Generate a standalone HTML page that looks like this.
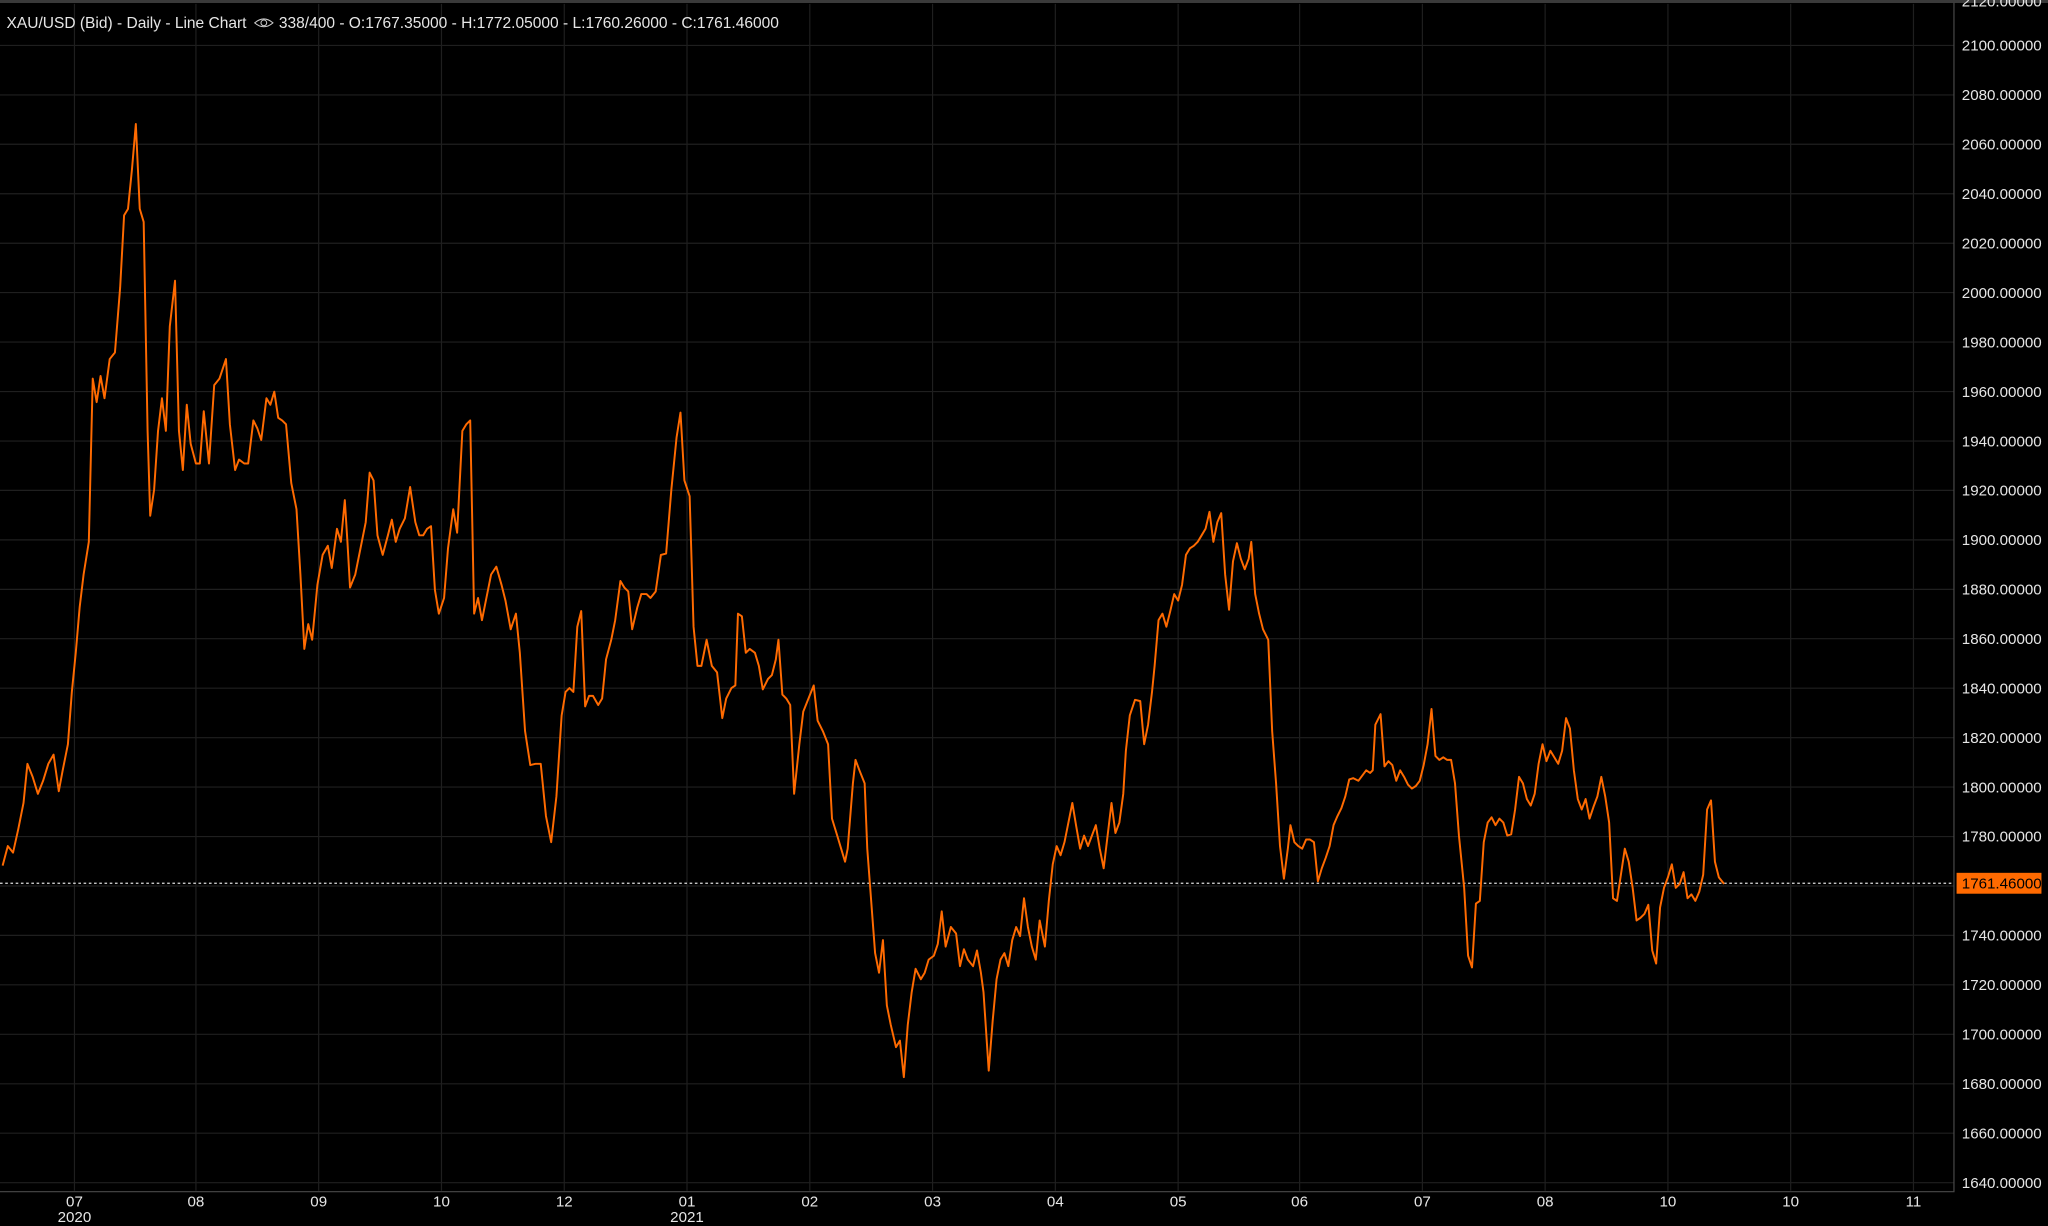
<!DOCTYPE html>
<html><head><meta charset="utf-8"><style>
html,body{margin:0;padding:0;background:#000;width:2048px;height:1226px;overflow:hidden}
svg{display:block}
text{font-family:"Liberation Sans",Arial,sans-serif;fill:#e6e6e6}
</style></head><body>
<svg width="2048" height="1226" viewBox="0 0 1568 939" preserveAspectRatio="none">
<rect width="1568" height="939" fill="#000"/>
<rect x="0" y="0" width="1568" height="2.3" fill="#3a3a3a"/>
<g stroke="#1f1f1f" stroke-width="0.9">
<path d="M0 34.8H1496M0 72.7H1496M0 110.5H1496M0 148.4H1496M0 186.3H1496M0 224.1H1496M0 262H1496M0 299.9H1496M0 337.8H1496M0 375.6H1496M0 413.5H1496M0 451.4H1496M0 489.2H1496M0 527.1H1496M0 565H1496M0 602.8H1496M0 640.7H1496M0 678.6H1496M0 716.4H1496M0 754.3H1496M0 792.2H1496M0 830.1H1496M0 867.9H1496M0 905.8H1496"/>
<path d="M57 3V912M150 3V912M244 3V912M338 3V912M432 3V912M526 3V912M620 3V912M714 3V912M808 3V912M902 3V912M995 3V912M1089 3V912M1183 3V912M1277 3V912M1371 3V912M1465 3V912"/>
</g>
<path d="M1496 2V912.7H0" fill="none" stroke="#4a4a4a" stroke-width="0.9"/>
<line x1="0" y1="676.5" x2="1496" y2="676.5" stroke="#ddd" stroke-width="0.9" stroke-dasharray="2,2"/>
<polyline fill="none" stroke="#ff6a00" stroke-width="1.5" stroke-linejoin="round" points="2,663 6,648 10,653 14,635 18,615 21,585 25,595 29,608 33,598 37,585 41,578 45,606 48,590 52,570 55,530 58,500 61,465 64,440 68,415 71,290 74,308 77,288 80,305 84,275 88,270 92,220 95,165 98,160 101,130 104,95 107,160 110,170 113,330 115,395 118,375 121,330 124,305 127,330 130,250 134,215 137,330 140,360 143,310 146,340 150,355 153,355 156,315 160,355 164,295 168,290 173,275 176,325 180,360 183,352 187,355 190,355 194,322 197,328 200,337 204,305 207,310 210,300 213,320 216,322 219,325 223,370 227,390 230,440 233,497 236,478 239,490 243,448 247,425 251,418 254,435 258,405 261,415 264,383 266,415 268,450 272,440 276,420 280,400 283,362 286,368 289,410 293,425 297,410 300,398 303,415 306,405 310,397 314,373 318,400 321,410 324,410 327,405 330,403 333,452 336,470 340,458 343,420 347,390 350,408 354,330 357,325 360,322 363,470 366,458 369,475 372,460 376,440 380,434 384,448 387,460 391,482 395,470 398,500 402,560 406,586 410,585 414,585 418,625 422,645 426,610 430,548 433,530 436,527 439,530 442,480 445,468 448,541 451,533 454,533 458,540 461,535 464,505 468,490 471,475 475,445 478,450 481,453 484,482 488,465 491,455 495,455 498,458 502,453 506,425 510,424 514,375 518,335 521,316 524,368 528,380 531,480 534,510 537,510 541,490 545,510 549,515 553,550 556,535 560,527 563,525 565,470 568,472 571,500 574,497 578,500 581,510 584,528 588,520 591,517 594,505 596,490 599,532 602,535 605,540 608,608 612,570 615,545 619,535 623,525 626,552 630,560 634,570 637,627 641,640 644,650 647,660 649,650 653,600 655,582 658,590 662,600 664,650 667,690 670,730 673,745 676,720 679,770 682,785 686,802 689,797 692,825 695,785 698,760 701,742 705,750 708,745 711,735 715,732 718,723 721,698 724,725 728,710 732,715 735,740 738,727 741,735 745,740 748,728 751,745 753,760 757,820 760,782 763,750 766,735 769,730 772,740 775,720 778,710 781,717 784,688 787,710 790,725 793,735 796,705 800,725 803,690 806,662 809,648 812,655 815,645 818,630 821,615 824,633 827,650 830,640 833,648 836,640 839,632 842,650 845,665 848,640 851,615 854,638 857,630 860,608 862,575 865,548 869,536 873,537 876,570 879,555 882,530 884,510 887,475 890,470 893,480 896,468 899,455 902,460 905,448 908,425 911,420 914,418 917,415 920,410 923,405 926,392 929,415 932,400 935,393 938,440 941,467 944,430 947,416 950,428 953,436 956,428 958,415 961,455 964,470 967,482 971,490 974,560 977,600 980,648 983,673 986,650 988,632 991,645 994,648 997,650 1000,643 1003,643 1006,645 1009,675 1012,665 1015,657 1018,648 1021,632 1024,625 1027,619 1030,610 1033,597 1036,596 1040,598 1043,594 1046,590 1049,592 1051,590 1053,555 1057,547 1060,587 1063,583 1066,586 1069,598 1072,590 1075,595 1078,601 1081,604 1084,602 1087,598 1090,586 1093,570 1096,543 1099,579 1102,582 1105,580 1108,582 1111,582 1114,600 1117,640 1121,680 1124,732 1127,741 1130,692 1133,690 1136,645 1139,630 1142,626 1145,632 1148,627 1151,630 1154,640 1157,639 1160,620 1163,595 1166,600 1169,612 1172,617 1175,608 1178,585 1181,570 1184,583 1187,575 1190,580 1193,585 1196,575 1199,550 1202,558 1205,590 1208,612 1211,620 1214,612 1217,627 1220,618 1223,610 1226,595 1229,610 1232,630 1235,688 1238,690 1241,670 1244,650 1247,660 1250,680 1253,705 1256,703 1259,700 1262,693 1265,728 1268,738 1271,695 1274,680 1277,672 1280,662 1283,680 1286,677 1289,668 1292,688 1295,685 1298,690 1301,683 1304,670 1307,620 1310,613 1313,660 1316,672 1320,677"/>
<text x="5" y="21.5" font-size="11.9">XAU/USD (Bid) - Daily - Line Chart</text>
<g transform="translate(202,17.5)" fill="none" stroke="#ccc" stroke-width="0.8"><path d="M-7 0Q0 -6 7 0Q0 6 -7 0Z"/><circle r="2.2"/></g>
<text x="213.5" y="21.5" font-size="11.9">338/400 - O:1767.35000 - H:1772.05000 - L:1760.26000 - C:1761.46000</text>
<g font-size="11.6">
<text x="1502" y="5">2120.00000</text>
<text x="1502" y="38.8">2100.00000</text>
<text x="1502" y="76.7">2080.00000</text>
<text x="1502" y="114.5">2060.00000</text>
<text x="1502" y="152.4">2040.00000</text>
<text x="1502" y="190.3">2020.00000</text>
<text x="1502" y="228.1">2000.00000</text>
<text x="1502" y="266">1980.00000</text>
<text x="1502" y="303.9">1960.00000</text>
<text x="1502" y="341.8">1940.00000</text>
<text x="1502" y="379.6">1920.00000</text>
<text x="1502" y="417.5">1900.00000</text>
<text x="1502" y="455.4">1880.00000</text>
<text x="1502" y="493.2">1860.00000</text>
<text x="1502" y="531.1">1840.00000</text>
<text x="1502" y="569">1820.00000</text>
<text x="1502" y="606.8">1800.00000</text>
<text x="1502" y="644.7">1780.00000</text>
<text x="1502" y="720.4">1740.00000</text>
<text x="1502" y="758.3">1720.00000</text>
<text x="1502" y="796.2">1700.00000</text>
<text x="1502" y="834.1">1680.00000</text>
<text x="1502" y="871.9">1660.00000</text>
<text x="1502" y="909.8">1640.00000</text>
</g>
<rect x="1498" y="668.5" width="65" height="16" fill="#ff6a00"/>
<text x="1502" y="680.7" font-size="11.6" style="fill:#000">1761.46000</text>
<g font-size="11.6" text-anchor="middle">
<text x="57" y="924">07</text><text x="57" y="936">2020</text>
<text x="150" y="924">08</text>
<text x="244" y="924">09</text>
<text x="338" y="924">10</text>
<text x="432" y="924">12</text>
<text x="526" y="924">01</text><text x="526" y="936">2021</text>
<text x="620" y="924">02</text>
<text x="714" y="924">03</text>
<text x="808" y="924">04</text>
<text x="902" y="924">05</text>
<text x="995" y="924">06</text>
<text x="1089" y="924">07</text>
<text x="1183" y="924">08</text>
<text x="1277" y="924">10</text>
<text x="1371" y="924">10</text>
<text x="1465" y="924">11</text>
</g>
</svg>
</body></html>
